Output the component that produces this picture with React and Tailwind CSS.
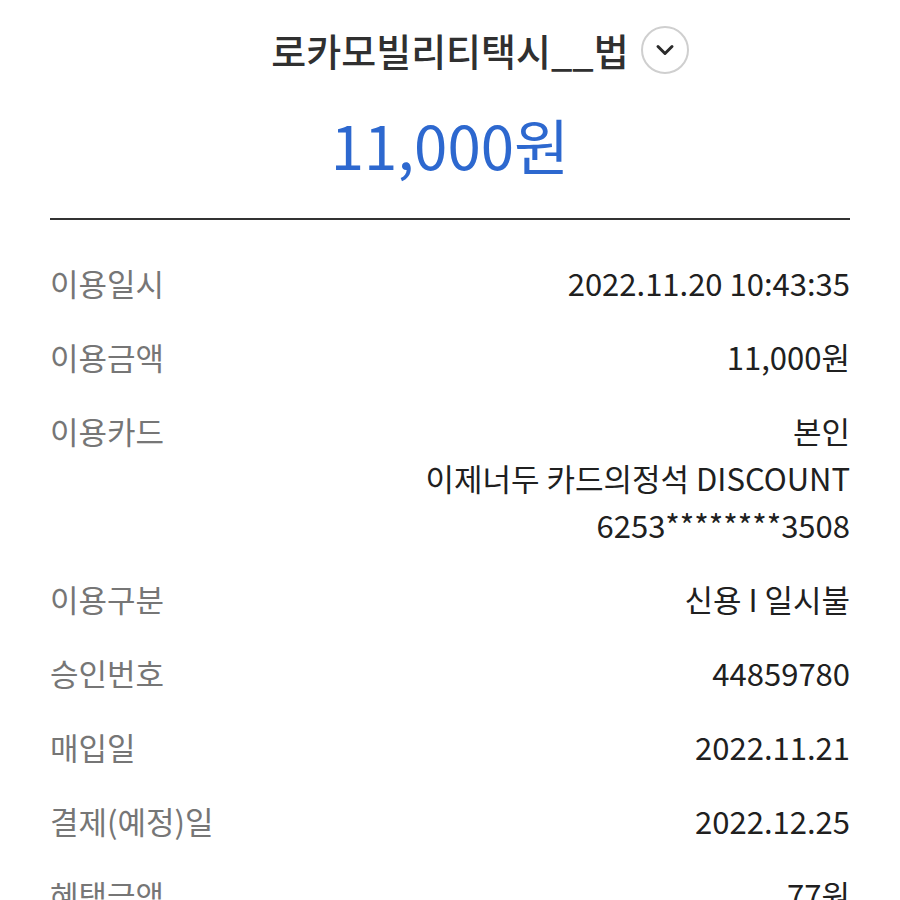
import React from 'react'

const rows = [
  { label: '이용일시', value: ['2022.11.20 10:43:35'] },
  { label: '이용금액', value: ['11,000원'] },
  { label: '이용카드', value: ['본인', '이제너두 카드의정석 DISCOUNT', '6253********3508'] },
  { label: '이용구분', value: ['신용 I 일시불'] },
  { label: '승인번호', value: ['44859780'] },
  { label: '매입일', value: ['2022.11.21'] },
  { label: '결제(예정)일', value: ['2022.12.25'] },
  { label: '혜택금액', value: ['77원'] },
]

function ChevronCircle() {
  return (
    <span className="absolute left-full top-1/2 ml-[12px] flex h-[48px] w-[48px] -translate-y-1/2 items-center justify-center rounded-full border-2 border-[#cfcfcf]">
      <svg width="20" height="12" viewBox="0 0 20 12" fill="none">
        <path d="M3 2.5l7 7 7-7" stroke="#2b2b2b" strokeWidth="3" strokeLinecap="round" strokeLinejoin="round" />
      </svg>
    </span>
  )
}

export default function App() {
  return (
    <div
      className="h-[900px] w-[900px] overflow-hidden bg-white px-[50px] pt-[26px]"
      style={{ fontFamily: '"Noto Sans CJK KR", "Noto Sans", sans-serif' }}
    >
      <div className="flex h-[48px] items-center justify-center">
        <span className="relative text-[38px] font-medium leading-[48px] text-[#303030]">
          로카모빌리티택시__법
          <ChevronCircle />
        </span>
      </div>
      <div className="mt-[35px] text-center text-[60px] leading-[70px] text-[#2d68cf]">11,000원</div>
      <div className="mt-[39px] h-[2px] bg-[#333333]" />
      <div className="mt-[39px] flex flex-col gap-[27px]">
        {rows.map((row) => (
          <div key={row.label} className="flex justify-between leading-[47px]">
            <span className="text-[31px] text-[#767676]">{row.label}</span>
            <div className="flex flex-col items-end text-[31px] text-[#202020]">
              {row.value.map((v) => (
                <span key={v}>{v}</span>
              ))}
            </div>
          </div>
        ))}
      </div>
    </div>
  )
}
